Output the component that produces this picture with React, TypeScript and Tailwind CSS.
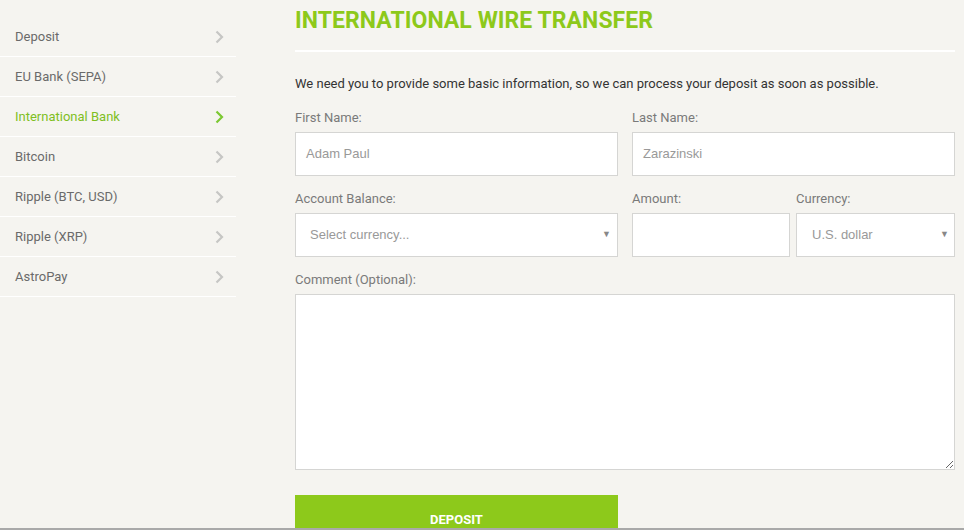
import React from 'react';

const methods = [
  'Deposit',
  'EU Bank (SEPA)',
  'International Bank',
  'Bitcoin',
  'Ripple (BTC, USD)',
  'Ripple (XRP)',
  'AstroPay',
];

const Chevron: React.FC<{ active?: boolean }> = ({ active }) => (
  <svg width="9" height="14" viewBox="0 0 9 14" fill="none">
    <path
      d="M1.5 1.5l5.5 5.5-5.5 5.5"
      stroke={active ? '#7cc832' : '#c6c6c4'}
      strokeWidth="2.2"
    />
  </svg>
);

const Caret = () => <span className="text-[9px] text-[#888]">▼</span>;

const field = "h-11 bg-white border border-[#d5d5d3] flex items-center text-[13px] text-[#999] font-['Liberation_Sans',Arial,sans-serif]";

const App: React.FC = () => {
  return (
    <div className="h-[530px] overflow-hidden bg-[#f5f4f0] border-b-2 border-[#a9a9a9] font-['Roboto',sans-serif] flex">
      {/* Sidebar */}
      <aside className="w-[236px] pt-[17px] shrink-0">
        {methods.map((m) => {
          const active = m === 'International Bank';
          return (
            <div
              key={m}
              className="h-10 flex items-center justify-between pl-[15px] pr-[12px] pt-[1px] border-b border-white text-[13px]"
            >
              <span className={active ? 'text-[#7fbf1f]' : 'text-[#6a6a6a]'}>{m}</span>
              <Chevron active={active} />
            </div>
          );
        })}
      </aside>

      {/* Main */}
      <main className="ml-[59px] w-[660px] pt-[6px]">
        <h1 className="text-[23px] font-bold text-[#8dc91b] leading-[30px] tracking-[0.05px]">
          INTERNATIONAL WIRE TRANSFER
        </h1>
        <div className="h-[2px] bg-white mt-[14px]" />
        <p className="mt-[24px] text-[13px] text-[#333] leading-4">
          We need you to provide some basic information, so we can process your deposit as soon as possible.
        </p>

        <div className="grid grid-cols-2 gap-x-[14px] mt-[18px]">
          <label className="flex flex-col">
            <span className="text-[13px] text-[#7a7a7a] leading-4 mb-[6px]">First Name:</span>
            <div className={`${field} px-[10px]`}>Adam Paul</div>
          </label>
          <label className="flex flex-col">
            <span className="text-[13px] text-[#7a7a7a] leading-4 mb-[6px]">Last Name:</span>
            <div className={`${field} px-[10px]`}>Zarazinski</div>
          </label>
        </div>

        <div className="flex mt-[15px]">
          <label className="flex flex-col w-[323px]">
            <span className="text-[13px] text-[#7a7a7a] leading-4 mb-[6px]">Account Balance:</span>
            <div className={`${field} justify-between pl-[14px] pr-[6px]`}>
              Select currency...
              <Caret />
            </div>
          </label>
          <label className="flex flex-col w-[158px] ml-[14px]">
            <span className="text-[13px] text-[#7a7a7a] leading-4 mb-[6px]">Amount:</span>
            <div className={field} />
          </label>
          <label className="flex flex-col w-[159px] ml-[6px]">
            <span className="text-[13px] text-[#7a7a7a] leading-4 mb-[6px]">Currency:</span>
            <div className={`${field} justify-between pl-[15px] pr-[5px]`}>
              U.S. dollar
              <Caret />
            </div>
          </label>
        </div>

        <div className="mt-[15px] flex flex-col">
          <span className="text-[13px] text-[#7a7a7a] leading-4 mb-[6px]">Comment (Optional):</span>
          <textarea className="h-[176px] bg-white border border-[#d5d5d3] resize-y outline-none" />
        </div>

        <button className="mt-[25px] w-[323px] h-[50px] bg-[#8dc91b] text-white font-bold text-[13px]">
          DEPOSIT
        </button>
      </main>
    </div>
  );
};

export default App;
